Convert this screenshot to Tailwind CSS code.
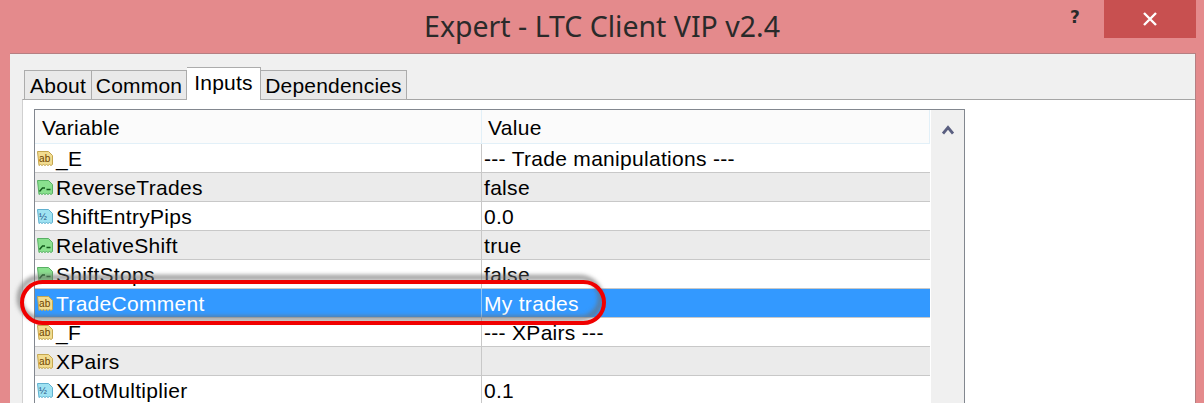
<!DOCTYPE html>
<html>
<head>
<meta charset="utf-8">
<title>Expert - LTC Client VIP v2.4</title>
<script src="https://cdn.jsdelivr.net/npm/@tailwindcss/browser@4"></script>
</head>
<body class="w-[1204px] h-[403px] overflow-hidden bg-[#e48a8c] font-['Liberation_Sans',sans-serif] text-black">
<svg width="0" height="0" class="absolute">
  <defs>
    <symbol id="ico-ab" viewBox="0 0 16 15">
      <path d="M.5.500h11l4 4v9l-1.500 1-1.500-1-1.500 1-1.500-1-1.500 1-1.500-1-1.500 1-1.500-1-1.500 1z" fill="#f2dc90" stroke="#c4a64e"/>
      <text x="2" y="11" font-size="10" font-family="Liberation Sans" fill="#6e4300">ab</text>
    </symbol>
    <symbol id="ico-bool" viewBox="0 0 16 15">
      <path d="M.5.500h11l4 4v9l-1.500 1-1.500-1-1.500 1-1.500-1-1.500 1-1.500-1-1.500 1-1.500-1-1.500 1z" fill="#8ae08e" stroke="#58b064"/>
      <path d="M2.500 11.500l3-3.500h2.500M9.500 9.500h4" fill="none" stroke="#145c1d" stroke-width="1.400"/>
    </symbol>
    <symbol id="ico-num" viewBox="0 0 16 15">
      <path d="M.5.500h11l4 4v9l-1.500 1-1.500-1-1.500 1-1.500-1-1.500 1-1.500-1-1.500 1-1.500-1-1.500 1z" fill="#9fe2f2" stroke="#5fb0cf"/>
      <text x="2" y="11" font-size="9.500" font-family="Liberation Sans" fill="#1a4a80">½</text>
    </symbol>
  </defs>
</svg>

<div class="h-[53px] relative flex items-center justify-center">
  <h1 class="text-[28.500px] font-normal font-['Noto_Sans',sans-serif] text-[#2a2a2a] leading-none">Expert - LTC Client VIP v2.4</h1>
  <span class="absolute left-[1070px] top-[7px] text-[17px] font-bold font-['DejaVu_Sans',sans-serif] text-[#2a2a2a] leading-[20px]">?</span>
  <div class="absolute left-[1104px] top-0 w-[92px] h-[38px] bg-[#c85050] flex items-center justify-center">
    <svg width="16" height="14" viewBox="0 0 16 14"><path d="M2 1l12 12M14 1L2 13" stroke="#fff" stroke-width="2.400"/></svg>
  </div>
</div>

<div class="ml-[10px] mr-[8px] h-[350px] bg-[#f0f0f0] border-t border-r border-[#b57f82] pl-[12px] pt-[13px]">
  <div class="flex items-end h-[33px] text-[21px] tracking-[0.2px] leading-none relative z-10 -mb-px">
    <div class="ml-[2px] w-[68px] h-[30px] border border-[#acacac] bg-[#e9e9e9] flex items-center justify-center">About</div>
    <div class="w-[95px] h-[30px] border border-[#acacac] border-l-0 bg-[#e9e9e9] flex items-center justify-center">Common</div>
    <div class="w-[74px] h-[33px] border border-[#acacac] border-b-0 border-l-0 bg-white flex items-center justify-center pb-[4px]">Inputs</div>
    <div class="w-[146px] h-[30px] border border-[#acacac] border-l-0 bg-[#e9e9e9] flex items-center justify-center">Dependencies</div>
  </div>
  <div class="h-[310px] border-t border-l border-t-[#a5a5a5] border-l-[#d0d0d0] bg-white pl-[11px] pt-[9px]">
    <div class="w-[931px] h-[300px] border border-b-0 border-[#82878f] flex">
      <div class="w-[895px] text-[21px] tracking-[0.3px] leading-none">
        <div class="flex h-[34px] bg-[#fbfbfb] border-b border-r border-[#e2f0f8] items-center">
          <div class="w-[447px] pl-[7px] border-r border-[#e2f0f8] h-full flex items-center pt-[2px]">Variable</div>
          <div class="pl-[6px] pt-[2px]">Value</div>
        </div>
        <div class="flex h-[29px] bg-white border-b border-[#c8c8c8] items-center">
          <div class="w-[447px] h-full border-r border-[#c8c8c8] flex items-center pl-[2px]"><svg class="w-[16px] h-[15px] mr-[3px] shrink-0"><use href="#ico-ab"/></svg>_E</div>
          <div class="pl-[2px]">--- Trade manipulations ---</div>
        </div>
        <div class="flex h-[29px] bg-[#ebebeb] border-b border-[#c8c8c8] items-center">
          <div class="w-[447px] h-full border-r border-[#c8c8c8] flex items-center pl-[2px]"><svg class="w-[16px] h-[15px] mr-[3px] shrink-0"><use href="#ico-bool"/></svg>ReverseTrades</div>
          <div class="pl-[2px]">false</div>
        </div>
        <div class="flex h-[29px] bg-white border-b border-[#c8c8c8] items-center">
          <div class="w-[447px] h-full border-r border-[#c8c8c8] flex items-center pl-[2px]"><svg class="w-[16px] h-[15px] mr-[3px] shrink-0"><use href="#ico-num"/></svg>ShiftEntryPips</div>
          <div class="pl-[2px]">0.0</div>
        </div>
        <div class="flex h-[29px] bg-[#ebebeb] border-b border-[#c8c8c8] items-center">
          <div class="w-[447px] h-full border-r border-[#c8c8c8] flex items-center pl-[2px]"><svg class="w-[16px] h-[15px] mr-[3px] shrink-0"><use href="#ico-bool"/></svg>RelativeShift</div>
          <div class="pl-[2px]">true</div>
        </div>
        <div class="flex h-[29px] bg-white border-b border-[#c8c8c8] items-center">
          <div class="w-[447px] h-full border-r border-[#c8c8c8] flex items-center pl-[2px]"><svg class="w-[16px] h-[15px] mr-[3px] shrink-0"><use href="#ico-bool"/></svg>ShiftStops</div>
          <div class="pl-[2px]">false</div>
        </div>
        <div class="flex h-[29px] bg-[#3399ff] text-white border-b border-[#c8c8c8] items-center">
          <div class="w-[447px] h-full border-r border-[#8ec4f5] flex items-center pl-[2px]"><svg class="w-[16px] h-[15px] mr-[3px] shrink-0"><use href="#ico-ab"/></svg>TradeComment</div>
          <div class="pl-[2px]">My trades</div>
        </div>
        <div class="flex h-[29px] bg-white border-b border-[#c8c8c8] items-center">
          <div class="w-[447px] h-full border-r border-[#c8c8c8] flex items-center pl-[2px]"><svg class="w-[16px] h-[15px] mr-[3px] shrink-0"><use href="#ico-ab"/></svg>_F</div>
          <div class="pl-[2px]">--- XPairs ---</div>
        </div>
        <div class="flex h-[29px] bg-[#ebebeb] border-b border-[#c8c8c8] items-center">
          <div class="w-[447px] h-full border-r border-[#c8c8c8] flex items-center pl-[2px]"><svg class="w-[16px] h-[15px] mr-[3px] shrink-0"><use href="#ico-ab"/></svg>XPairs</div>
          <div class="pl-[2px]"></div>
        </div>
        <div class="flex h-[29px] bg-white border-b border-[#c8c8c8] items-center">
          <div class="w-[447px] h-full border-r border-[#c8c8c8] flex items-center pl-[2px]"><svg class="w-[16px] h-[15px] mr-[3px] shrink-0"><use href="#ico-num"/></svg>XLotMultiplier</div>
          <div class="pl-[2px]">0.1</div>
        </div>
      </div>
      <div class="w-[33px] bg-[#f0f0f0] ml-[1px] pt-[15px] flex justify-center items-start">
        <svg width="12" height="10" viewBox="0 0 12 10"><path d="M1 8.500l5-6 5 6" fill="none" stroke="#5a5f80" stroke-width="2.800"/></svg>
      </div>
    </div>
  </div>
</div>

<!-- hand drawn red marker round the selected row -->
<div class="absolute left-[17px] top-[275px] w-[586px] h-[46px] rounded-[23px] border-[5px] border-[#6e6e6e]/70 blur-[2px]"></div>
<div class="absolute left-[20px] top-[280px] w-[586px] h-[45px] rounded-[23px] border-[4px] border-[#f00000]"></div>
</body>
</html>
